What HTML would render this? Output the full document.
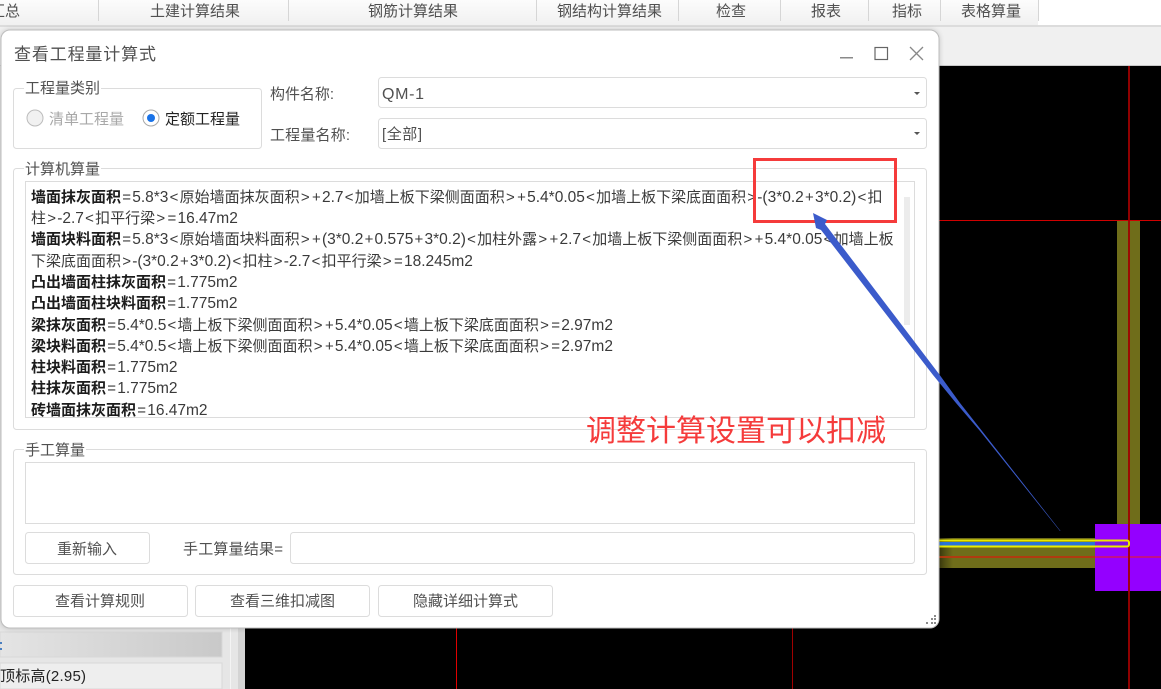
<!DOCTYPE html>
<html lang="zh"><head><meta charset="utf-8"><title>查看工程量计算式</title>
<style>
html,body{margin:0;padding:0;background:#000;width:1161px;height:689px;overflow:hidden}
svg{display:block;position:absolute;left:0;top:0;filter:blur(.3px)}
text{font-family:"Liberation Sans","Noto Sans CJK SC",sans-serif;font-size:15px;fill:#3a3a3a;white-space:pre}
.t{fill:#222}
.g{fill:#505050}
#calc{position:absolute;left:0;top:1px;width:1161px;height:688px;filter:blur(.3px);font-family:"Liberation Sans","Noto Sans CJK SC",sans-serif;font-size:15px;color:#3a3a3a}
#calc div{position:absolute;left:31px;line-height:20px;height:20px;white-space:nowrap}
#calc b{font-weight:700;color:#1c1c1c}
#calc u{display:inline-block;width:11.2px;text-align:center;text-decoration:none}
#calc s{text-decoration:none;font-size:15.5px}
</style></head><body>
<svg width="1161" height="689" viewBox="0 0 1161 689" xmlns="http://www.w3.org/2000/svg">
<defs>
<linearGradient id="bar" x1="0" y1="0" x2="0" y2="1"><stop offset="0" stop-color="#fcfcfc"/><stop offset="1" stop-color="#f0f0f0"/></linearGradient>
<linearGradient id="row" x1="0" y1="0" x2="1" y2="0"><stop offset="0" stop-color="#e4e4e4"/><stop offset="1" stop-color="#c9c9c9"/></linearGradient>
<linearGradient id="fade" x1="0" y1="0" x2="1" y2="0"><stop offset="0" stop-color="#000" stop-opacity=".45"/><stop offset="1" stop-color="#000" stop-opacity="0"/></linearGradient>
<filter id="sh" x="-5%" y="-5%" width="110%" height="110%"><feGaussianBlur stdDeviation="3"/></filter>
</defs>

<!-- app background -->
<rect x="0" y="0" width="1161" height="689" fill="#000"/>
<rect x="0" y="0" width="1161" height="26" fill="#fff"/>
<rect x="0" y="0" width="1038" height="25" fill="url(#bar)"/>
<rect x="0" y="26" width="1161" height="39" fill="#f0f0f0"/>
<rect x="0" y="25" width="1161" height="2" fill="#dcdcdc"/>
<rect x="0" y="65" width="1161" height="1" fill="#c8c8c8"/>
<rect x="0" y="66" width="245" height="623" fill="#e6e6e6"/>
<rect x="0" y="632" width="222" height="25" fill="url(#row)" stroke="#d8d8d8"/>
<rect x="0" y="663" width="222" height="26" fill="#eeeeee" stroke="#d8d8d8"/>
<rect x="0" y="642" width="2" height="2" fill="#4a7fc0"/>
<rect x="0" y="648" width="2" height="2" fill="#4a7fc0"/>
<rect x="230" y="628" width="1" height="61" fill="#f4f4f4"/>
<rect x="238" y="628" width="7" height="61" fill="#d4d4d4"/>
<text x="0" y="681" textLength="86" lengthAdjust="spacing" class="t">顶标高(2.95)</text>

<!-- tab bar -->
<g fill="#d6d6d6">
<rect x="98" y="0" width="1" height="21"/><rect x="288" y="0" width="1" height="21"/><rect x="536" y="0" width="1" height="21"/>
<rect x="678" y="0" width="1" height="21"/><rect x="780" y="0" width="1" height="21"/><rect x="868" y="0" width="1" height="21"/>
<rect x="940" y="0" width="1" height="21"/><rect x="1038" y="0" width="1" height="21"/>
</g>
<text x="-10" y="16" textLength="30" class="g">汇总</text>
<text x="150" y="16" textLength="90" class="g">土建计算结果</text>
<text x="368" y="16" textLength="90" class="g">钢筋计算结果</text>
<text x="557" y="16" textLength="105" class="g">钢结构计算结果</text>
<text x="716" y="16" textLength="30" class="g">检查</text>
<text x="811" y="16" textLength="30" class="g">报表</text>
<text x="892" y="16" textLength="30" class="g">指标</text>
<text x="961" y="16" textLength="60" class="g">表格算量</text>

<!-- CAD canvas -->
<rect x="456" y="628" width="1" height="61" fill="#e00000"/>
<rect x="792" y="628" width="1" height="61" fill="#a00000"/>
<rect x="1117" y="221" width="23" height="303" fill="#6f6d1a"/>
<rect x="939" y="538" width="156" height="30" fill="#6f6d1a"/>
<rect x="939" y="538" width="14" height="30" fill="url(#fade)"/>
<rect x="1095" y="524" width="66" height="67" fill="#9400ff"/>
<rect x="939" y="220" width="222" height="1" fill="#d00000"/>
<rect x="939" y="556" width="156" height="2" fill="#b03a10"/>
<rect x="1095" y="556" width="66" height="2" fill="#c0108a"/>
<rect x="1128" y="66" width="2" height="623" fill="#a00000" opacity=".9"/>
<rect x="939" y="542" width="156" height="4" fill="#2a74d8"/>
<rect x="1095" y="542" width="34" height="4" fill="#7a18e0"/>
<path d="M939 540.500H1127a2 2 0 0 1 2 2v2a2 2 0 0 1-2 2H939" fill="none" stroke="#eaea00" stroke-width="2"/>

<!-- dialog -->
<rect x="1" y="30" width="938" height="598" rx="9" fill="#000" opacity=".22" filter="url(#sh)"/>
<rect x="1" y="30" width="938" height="598" rx="9" fill="#fff" stroke="#bdbdbd" stroke-width="1"/>
<text x="14" y="60" textLength="142" style="font-size:17px" class="g">查看工程量计算式</text>
<rect x="840" y="57" width="13" height="1.500" fill="#8a8a8a"/>
<rect x="875" y="47.500" width="12.500" height="12" fill="none" stroke="#666" stroke-width="1.200"/>
<path d="M910 47L923 60M923 47L910 60" stroke="#888" stroke-width="1.300" fill="none"/>

<!-- groups and controls -->
<g fill="none" stroke="#dcdcdc" stroke-width="1">
<rect x="13.500" y="88.500" width="248" height="60" rx="3"/>
<rect x="13.500" y="168.500" width="913" height="261" rx="3"/>
<rect x="13.500" y="449.500" width="913" height="125" rx="3"/>
<rect x="378.500" y="77.500" width="548" height="30" rx="3" fill="#fff"/>
<rect x="378.500" y="118.500" width="548" height="30" rx="3" fill="#fff"/>
<rect x="25.500" y="181.500" width="889" height="236" fill="#fff"/>
<rect x="25.500" y="462.500" width="889" height="61" fill="#fff"/>
<rect x="25.500" y="532.500" width="124" height="31" rx="3" fill="#fff"/>
<rect x="290.500" y="532.500" width="624" height="31" rx="3" fill="#fff"/>
<rect x="13.500" y="585.500" width="174" height="31" rx="3" fill="#fff"/>
<rect x="195.500" y="585.500" width="174" height="31" rx="3" fill="#fff"/>
<rect x="378.500" y="585.500" width="174" height="31" rx="3" fill="#fff"/>
</g>
<rect x="24" y="80" width="77" height="14" fill="#fff"/>
<text x="25" y="93" textLength="75" class="g">工程量类别</text>
<rect x="24" y="160" width="77" height="14" fill="#fff"/>
<text x="25" y="174" textLength="75" class="g">计算机算量</text>
<rect x="24" y="442" width="62" height="14" fill="#fff"/>
<text x="25" y="455" textLength="60" class="g">手工算量</text>

<circle cx="35" cy="118" r="8" fill="#f1f1f1" stroke="#bcbcbc"/>
<text x="49" y="124" textLength="75" style="fill:#a8a8a8">清单工程量</text>
<circle cx="151" cy="118" r="8" fill="#fff" stroke="#a9a9a9"/>
<circle cx="151" cy="118" r="4" fill="#1a73e8"/>
<text x="165" y="124" textLength="75" class="t">定额工程量</text>

<text x="270" y="99" textLength="64" class="g">构件名称:</text>
<text x="270" y="140" textLength="80" class="g">工程量名称:</text>
<text x="382" y="99" textLength="42" style="font-size:16px" class="g">QM-1</text>
<text x="382" y="139" textLength="40" class="g">[全部]</text>
<path d="M914 92h6l-3 3zM914 132h6l-3 3z" fill="#555"/>

<!-- scrollbar -->
<rect x="904" y="197" width="6" height="128" fill="#ececec"/>

<!-- manual section -->
<text x="57" y="554" textLength="60" class="g">重新输入</text>
<text x="183" y="554" textLength="100" class="g">手工算量结果=</text>
<text x="55" y="606" textLength="90" class="g">查看计算规则</text>
<text x="230" y="606" textLength="105" class="g">查看三维扣减图</text>
<text x="413" y="606" textLength="105" class="g">隐藏详细计算式</text>
<g fill="#8a8a8a">
<rect x="934" y="615" width="2" height="2"/><rect x="931" y="618" width="2" height="2"/><rect x="934" y="618" width="2" height="2"/>
<rect x="926" y="622" width="2" height="2"/><rect x="931" y="622" width="2" height="2"/><rect x="934" y="622" width="2" height="2"/>
</g>
</svg>

<div id="calc">
<div style="top:187px"><b>墙面抹灰面积</b><u>=</u><s>5.8*3</s><u>&lt;</u>原始墙面抹灰面积<u>&gt;</u><u>+</u><s>2.7</s><u>&lt;</u>加墙上板下梁侧面面积<u>&gt;</u><u>+</u><s>5.4*0.05</s><u>&lt;</u>加墙上板下梁底面面积<u>&gt;</u><s>-(3*0.2</s><u>+</u><s>3*0.2)</s><u>&lt;</u>扣</div>
<div style="top:208px">柱<u>&gt;</u><s>-2.7</s><u>&lt;</u>扣平行梁<u>&gt;</u><u>=</u><s>16.47m2</s></div>
<div style="top:229px"><b>墙面块料面积</b><u>=</u><s>5.8*3</s><u>&lt;</u>原始墙面块料面积<u>&gt;</u><u>+</u><s>(3*0.2</s><u>+</u><s>0.575</s><u>+</u><s>3*0.2)</s><u>&lt;</u>加柱外露<u>&gt;</u><u>+</u><s>2.7</s><u>&lt;</u>加墙上板下梁侧面面积<u>&gt;</u><u>+</u><s>5.4*0.05</s><u>&lt;</u>加墙上板</div>
<div style="top:251px">下梁底面面积<u>&gt;</u><s>-(3*0.2</s><u>+</u><s>3*0.2)</s><u>&lt;</u>扣柱<u>&gt;</u><s>-2.7</s><u>&lt;</u>扣平行梁<u>&gt;</u><u>=</u><s>18.245m2</s></div>
<div style="top:272px"><b>凸出墙面柱抹灰面积</b><u>=</u><s>1.775m2</s></div>
<div style="top:293px"><b>凸出墙面柱块料面积</b><u>=</u><s>1.775m2</s></div>
<div style="top:315px"><b>梁抹灰面积</b><u>=</u><s>5.4*0.5</s><u>&lt;</u>墙上板下梁侧面面积<u>&gt;</u><u>+</u><s>5.4*0.05</s><u>&lt;</u>墙上板下梁底面面积<u>&gt;</u><u>=</u><s>2.97m2</s></div>
<div style="top:336px"><b>梁块料面积</b><u>=</u><s>5.4*0.5</s><u>&lt;</u>墙上板下梁侧面面积<u>&gt;</u><u>+</u><s>5.4*0.05</s><u>&lt;</u>墙上板下梁底面面积<u>&gt;</u><u>=</u><s>2.97m2</s></div>
<div style="top:357px"><b>柱块料面积</b><u>=</u><s>1.775m2</s></div>
<div style="top:378px"><b>柱抹灰面积</b><u>=</u><s>1.775m2</s></div>
<div style="top:400px;height:16px;overflow:hidden"><b>砖墙面抹灰面积</b><u>=</u><s>16.47m2</s></div>
</div>

<svg width="1161" height="689" viewBox="0 0 1161 689" xmlns="http://www.w3.org/2000/svg">
<!-- annotations -->
<rect x="754.500" y="159.500" width="141" height="62" fill="none" stroke="#f53b3b" stroke-width="3"/>
<path d="M813 213L827 220L825 224L939 374L960 403L982 431L1060.500 531L1060 531L980 431L956 403L933 375L821 230L816 228Z" fill="#3b5bcb"/>
<text x="586" y="441" textLength="300" style="font-size:30px;fill:#f53b3b">调整计算设置可以扣减</text>
</svg>
</body></html>
